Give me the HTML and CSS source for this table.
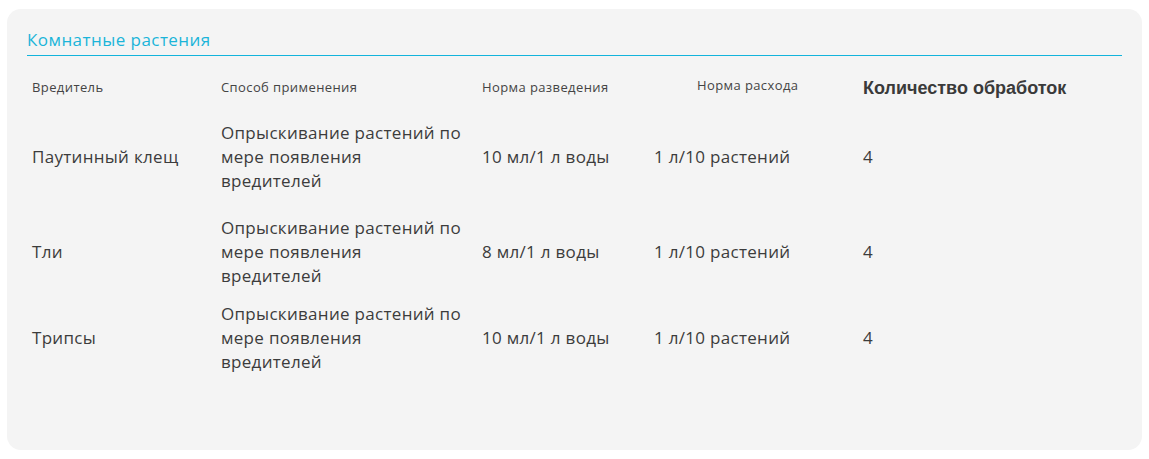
FILE: index.html
```html
<!DOCTYPE html>
<html lang="ru">
<head>
<meta charset="utf-8">
<title>Комнатные растения</title>
<link rel="stylesheet" href="styles.css">
</head>
<body>
<section class="card">
  <h2 class="card__title">Комнатные растения</h2>
  <div class="table">
    <div class="row row--head">
      <div class="cell">Вредитель</div>
      <div class="cell">Способ применения</div>
      <div class="cell">Норма разведения</div>
      <div class="cell cell--shift">Норма расхода</div>
      <div class="cell cell--strong">Количество обработок</div>
    </div>
    <div class="row row--first">
      <div class="cell">Паутинный клещ</div>
      <div class="cell cell--wrap">Опрыскивание растений по мере появления вредителей</div>
      <div class="cell">10 мл/1 л воды</div>
      <div class="cell">1 л/10 растений</div>
      <div class="cell">4</div>
    </div>
    <div class="row row--second">
      <div class="cell">Тли</div>
      <div class="cell cell--wrap">Опрыскивание растений по мере появления вредителей</div>
      <div class="cell">8 мл/1 л воды</div>
      <div class="cell">1 л/10 растений</div>
      <div class="cell">4</div>
    </div>
    <div class="row row--third">
      <div class="cell">Трипсы</div>
      <div class="cell cell--wrap">Опрыскивание растений по мере появления вредителей</div>
      <div class="cell">10 мл/1 л воды</div>
      <div class="cell">1 л/10 растений</div>
      <div class="cell">4</div>
    </div>
  </div>
</section>
</body>
</html>
```

FILE: styles.css
```css
html, body {
  margin: 0;
  padding: 0;
  background: #ffffff;
}

body {
  font-family: "Open Sans", "Noto Sans", "Liberation Sans", sans-serif;
  color: #3c3c3c;
}

.card {
  margin: 9px 7px;
  height: 441px;
  box-sizing: border-box;
  background: #f4f4f4;
  border-radius: 14px;
  padding: 21px 20px 0 20px;
}

.card__title {
  margin: 0;
  font-size: 17px;
  letter-spacing: 0.45px;
  line-height: 20px;
  font-weight: 400;
  color: #1bb4d9;
  padding-bottom: 5px;
  border-bottom: 1px solid #12b4dc;
}

.table {
  padding-left: 5px;
}

.row {
  display: grid;
  grid-template-columns: 189px 261px 172px 209px 1fr;
  align-items: center;
}

.row--head {
  margin-top: 20px;
  height: 20px;
  font-size: 13px;
  letter-spacing: 0.4px;
  line-height: 20px;
  color: #444444;
}

.row--first,
.row--second,
.row--third {
  height: 72px;
  font-size: 17px;
  letter-spacing: 0.3px;
  line-height: 24px;
}

.row--first { margin-top: 25px; }
.row--second { margin-top: 23px; }
.row--third { margin-top: 14px; }

.cell--wrap {
  max-width: 243px;
}

.cell--shift {
  padding-left: 43px;
  margin-top: -4px;
}

.cell--strong {
  font-family: "Liberation Sans", "Open Sans", sans-serif;
  font-size: 18px;
  letter-spacing: 0;
  font-weight: 700;
  color: #3a3a3a;
  margin-top: 2px;
}
```
